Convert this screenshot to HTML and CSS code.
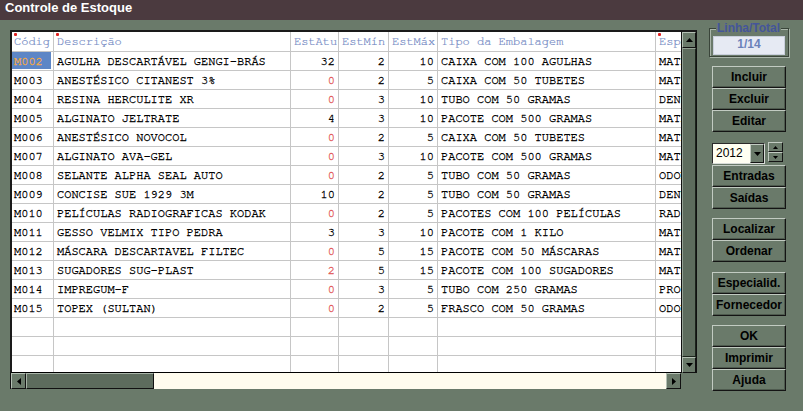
FILE: index.html
```html
<!DOCTYPE html>
<html lang="pt">
<head>
<meta charset="utf-8">
<title>Controle de Estoque</title>
<link rel="stylesheet" href="styles.css">
</head>
<body>
<div class="window">
  <div class="titlebar">Controle de Estoque</div>
  <div class="content">
    <div class="gridbox">
      <div class="grid-view">
        <table class="grid">
          <colgroup>
            <col class="c-cod"><col class="c-desc"><col class="c-num1"><col class="c-num2"><col class="c-num3"><col class="c-tipo"><col class="c-esp">
          </colgroup>
          <thead>
            <tr>
              <th class="req">Códig</th>
              <th class="req">Descrição</th>
              <th class="num">EstAtu</th>
              <th class="num">EstMín</th>
              <th class="num">EstMáx</th>
              <th>Tipo da Embalagem</th>
              <th class="req">Especialidade</th>
            </tr>
          </thead>
          <tbody>
            <tr><td class="sel">M002</td><td>AGULHA DESCARTÁVEL GENGI-BRÁS</td><td class="num">32</td><td class="num">2</td><td class="num">10</td><td>CAIXA COM 100 AGULHAS</td><td>MATERIAL</td></tr>
            <tr><td>M003</td><td>ANESTÉSICO CITANEST 3%</td><td class="num low">0</td><td class="num">2</td><td class="num">5</td><td>CAIXA COM 50 TUBETES</td><td>MATERIAL</td></tr>
            <tr><td>M004</td><td>RESINA HERCULITE XR</td><td class="num low">0</td><td class="num">3</td><td class="num">10</td><td>TUBO COM 50 GRAMAS</td><td>DENTÍSTICA</td></tr>
            <tr><td>M005</td><td>ALGINATO JELTRATE</td><td class="num">4</td><td class="num">3</td><td class="num">10</td><td>PACOTE COM 500 GRAMAS</td><td>MATERIAL</td></tr>
            <tr><td>M006</td><td>ANESTÉSICO NOVOCOL</td><td class="num low">0</td><td class="num">2</td><td class="num">5</td><td>CAIXA COM 50 TUBETES</td><td>MATERIAL</td></tr>
            <tr><td>M007</td><td>ALGINATO AVA-GEL</td><td class="num low">0</td><td class="num">3</td><td class="num">10</td><td>PACOTE COM 500 GRAMAS</td><td>MATERIAL</td></tr>
            <tr><td>M008</td><td>SELANTE ALPHA SEAL AUTO</td><td class="num low">0</td><td class="num">2</td><td class="num">5</td><td>TUBO COM 50 GRAMAS</td><td>ODONTOPEDIATRIA</td></tr>
            <tr><td>M009</td><td>CONCISE SUE 1929 3M</td><td class="num">10</td><td class="num">2</td><td class="num">5</td><td>TUBO COM 50 GRAMAS</td><td>DENTÍSTICA</td></tr>
            <tr><td>M010</td><td>PELÍCULAS RADIOGRAFICAS KODAK</td><td class="num low">0</td><td class="num">2</td><td class="num">5</td><td>PACOTES COM 100 PELÍCULAS</td><td>RADIOLOGIA</td></tr>
            <tr><td>M011</td><td>GESSO VELMIX TIPO PEDRA</td><td class="num">3</td><td class="num">3</td><td class="num">10</td><td>PACOTE COM 1 KILO</td><td>MATERIAL</td></tr>
            <tr><td>M012</td><td>MÁSCARA DESCARTAVEL FILTEC</td><td class="num low">0</td><td class="num">5</td><td class="num">15</td><td>PACOTE COM 50 MÁSCARAS</td><td>MATERIAL</td></tr>
            <tr><td>M013</td><td>SUGADORES SUG-PLAST</td><td class="num low">2</td><td class="num">5</td><td class="num">15</td><td>PACOTE COM 100 SUGADORES</td><td>MATERIAL</td></tr>
            <tr><td>M014</td><td>IMPREGUM-F</td><td class="num low">0</td><td class="num">3</td><td class="num">5</td><td>TUBO COM 250 GRAMAS</td><td>PROTESE</td></tr>
            <tr><td>M015</td><td>TOPEX (SULTAN)</td><td class="num low">0</td><td class="num">2</td><td class="num">5</td><td>FRASCO COM 50 GRAMAS</td><td>ODONTOPEDIATRIA</td></tr>
            <tr><td></td><td></td><td></td><td></td><td></td><td></td><td></td></tr>
            <tr><td></td><td></td><td></td><td></td><td></td><td></td><td></td></tr>
            <tr><td></td><td></td><td></td><td></td><td></td><td></td><td></td></tr>
          </tbody>
        </table>
      </div>
      <div class="vscroll">
        <div class="sb-btn vbtn"><svg width="7" height="4" viewBox="0 0 7 4"><polygon points="3.5,0 7,4 0,4" fill="#000"/></svg></div>
        <div class="vthumb"></div>
        <div class="sb-btn vbtn"><svg width="7" height="4" viewBox="0 0 7 4"><polygon points="0,0 7,0 3.5,4" fill="#000"/></svg></div>
      </div>
      <div class="hscroll">
        <div class="sb-btn hbtn"><svg width="4" height="7" viewBox="0 0 4 7"><polygon points="4,0 4,7 0,3.5" fill="#000"/></svg></div>
        <div class="hthumb"></div>
        <div class="htrack"></div>
        <div class="sb-btn hbtn"><svg width="4" height="7" viewBox="0 0 4 7"><polygon points="0,0 4,3.5 0,7" fill="#000"/></svg></div>
      </div>
      <div class="corner"></div>
    </div>

    <div class="side">
      <div class="counter">
        <span class="counter-label">Linha/Total</span>
        <div class="counter-value">1/14</div>
      </div>

      <div class="btn-group g1">
        <button class="btn">Incluir</button>
        <button class="btn">Excluir</button>
        <button class="btn">Editar</button>
      </div>

      <div class="year-row">
        <div class="combo">
          <span class="combo-text">2012</span>
          <span class="combo-btn"><svg width="7" height="4" viewBox="0 0 7 4"><polygon points="0,0 7,0 3.5,4" fill="#000"/></svg></span>
        </div>
        <div class="spin">
          <span class="spin-half"><svg width="5" height="3" viewBox="0 0 5 3"><polygon points="2.5,0 5,3 0,3" fill="#000"/></svg></span>
          <span class="spin-half"><svg width="5" height="3" viewBox="0 0 5 3"><polygon points="0,0 5,0 2.5,3" fill="#000"/></svg></span>
        </div>
      </div>

      <div class="btn-group g2">
        <button class="btn">Entradas</button>
        <button class="btn">Saídas</button>
      </div>

      <div class="btn-group g3">
        <button class="btn">Localizar</button>
        <button class="btn">Ordenar</button>
      </div>

      <div class="btn-group g4">
        <button class="btn">Especialid.</button>
        <button class="btn">Fornecedor</button>
      </div>

      <div class="btn-group g5">
        <button class="btn">OK</button>
        <button class="btn">Imprimir</button>
        <button class="btn">Ajuda</button>
      </div>
    </div>
  </div>
</div>
</body>
</html>
```
FILE: styles.css
```css
html, body {
  margin: 0;
  padding: 0;
}
body {
  background: #6a7a6a;
  width: 803px;
  height: 411px;
  overflow: hidden;
  font-family: "Liberation Sans", Arial, sans-serif;
}

.titlebar {
  height: 20px;
  line-height: 20px;
  background: #4b3a3f;
  color: #ffffff;
  font: bold 13px "Liberation Sans", Arial, sans-serif;
  padding-left: 5px;
}

.content {
  display: flex;
  align-items: flex-start;
}

/* ---------- grid ---------- */
.gridbox {
  margin-left: 10px;
  margin-top: 10px;
  display: grid;
  grid-template-columns: 671px 16px;
  grid-template-rows: 343px 16px;
}

.grid-view {
  background: #ffffff;
  border-top: 2px solid #1a1a1a;
  border-left: 2px solid #1a1a1a;
  border-bottom: 1px solid #000;
  box-sizing: border-box;
  overflow: hidden;
}

.grid {
  table-layout: fixed;
  border-collapse: separate;
  border-spacing: 0;
  width: 720px;
  font: 12px "Nimbus Mono PS", "Nimbus Mono L", "FreeMono", "Liberation Mono", monospace;
}
.c-cod { width: 42px; }
.c-desc { width: 237px; }
.c-num1 { width: 48px; }
.c-num2 { width: 50px; }
.c-num3 { width: 49px; }
.c-tipo { width: 218px; }
.c-esp { width: 76px; }

.grid th,
.grid td {
  box-sizing: border-box;
  border-right: 1px solid #c6c6c6;
  border-bottom: 1px solid #c6c6c6;
  padding: 0 3px;
  white-space: nowrap;
  overflow: hidden;
  text-align: left;
  vertical-align: middle;
}
.grid th {
  height: 20px;
  line-height: 19px;
  font-weight: normal;
  color: #6f86c2;
  position: relative;
  -webkit-text-stroke: 0.2px currentColor;
}
.grid td {
  height: 19px;
  line-height: 18px;
  color: #000;
  -webkit-text-stroke: 0.3px currentColor;
}
.grid th:first-child,
.grid td:first-child {
  padding-left: 2px;
}
.grid .num {
  text-align: right;
}
.grid .low {
  color: #e25a5a;
}
.grid td.sel {
  background: #5d86c6;
  color: #f2a845;
  box-shadow: inset -2px 0 0 #ffffff, inset 0 -1px 0 #ffffff;
}
.grid th.req::before {
  content: "";
  position: absolute;
  left: 2px;
  top: 1px;
  width: 3px;
  height: 3px;
  border-radius: 1px;
  background: #e02020;
}

/* ---------- scrollbars ---------- */
.sb-btn {
  box-sizing: border-box;
  background: #6a7a6a;
  border: 1px solid;
  border-color: #b4c0b4 #111 #111 #b4c0b4;
  display: flex;
  align-items: center;
  justify-content: center;
}

.vscroll {
  display: flex;
  flex-direction: column;
  background: #5d6c5d;
  border-left: 1px solid #111;
  border-right: 1px solid #111;
  border-top: 2px solid #1a1a1a;
  box-sizing: border-box;
}
.vbtn {
  height: 16px;
}
.vthumb {
  flex: 1;
  box-sizing: border-box;
  border: 1px solid;
  border-color: #93a093 #1c241c #1c241c #93a093;
  background: #5d6c5d;
}

.hscroll {
  display: flex;
  border-left: 1px solid #111;
  box-sizing: border-box;
}
.hbtn {
  width: 15px;
  height: 16px;
}
.hthumb {
  width: 128px;
  box-sizing: border-box;
  border: 1px solid;
  border-color: #a8b4a8 #111 #111 #a8b4a8;
  background: #5d6c5d;
}
.htrack {
  flex: 1;
  background: #fffcee;
}

.corner {
  background: #6a7a6a;
}

/* ---------- side panel ---------- */
.side {
  display: flex;
  flex-direction: column;
  padding-left: 12px;
}

.counter {
  position: relative;
  margin-top: 8px;
  width: 80px;
  box-sizing: border-box;
  padding: 7px 3px 1px 3px;
  border: 1px solid #3a453a;
  box-shadow: 1px 1px 0 #a9b5a9, inset 1px 1px 0 #a9b5a9;
}
.counter-label {
  position: absolute;
  top: -8px;
  left: 6px;
  padding: 0 1px;
  background: #6a7a6a;
  font: bold 12px "Liberation Sans", Arial, sans-serif;
  line-height: 14px;
  color: #44559a;
}
.counter-value {
  height: 19px;
  line-height: 19px;
  box-sizing: border-box;
  background: #e6eaf3;
  border: 1px solid #c9cfdc;
  text-align: center;
  font: bold 12px "Liberation Sans", Arial, sans-serif;
  color: #6b82ba;
}

.btn-group {
  display: flex;
  flex-direction: column;
  margin-left: 3px;
}
.g1 { margin-top: 9px; }
.g2 { margin-top: 1px; }
.g3 { margin-top: 9px; }
.g4 { margin-top: 10px; }
.g5 { margin-top: 9px; }

.btn {
  display: block;
  width: 74px;
  height: 22px;
  box-sizing: border-box;
  margin: 0;
  padding: 0;
  background: #6a7a6a;
  border: 1px solid;
  border-color: #c2cbc2 #141414 #141414 #c2cbc2;
  box-shadow: inset -1px -1px 0 #4e5a4e;
  font: bold 12px "Liberation Sans", Arial, sans-serif;
  color: #000;
  text-align: center;
  line-height: 20px;
}

.year-row {
  display: flex;
  align-items: flex-start;
  margin-top: 11px;
  margin-left: 3px;
}
.combo {
  display: flex;
  width: 53px;
  height: 21px;
  box-sizing: border-box;
  border: 1px solid;
  border-color: #2a2a2a #d8dcd8 #d8dcd8 #2a2a2a;
  background: #fffff2;
}
.combo-text {
  flex: 1;
  font: 12px "Liberation Sans", Arial, sans-serif;
  line-height: 19px;
  padding-left: 3px;
  color: #000;
}
.combo-btn {
  width: 14px;
  box-sizing: border-box;
  background: #6a7a6a;
  border: 1px solid;
  border-color: #c2cbc2 #141414 #141414 #c2cbc2;
  display: flex;
  align-items: center;
  justify-content: center;
}
.spin {
  display: flex;
  flex-direction: column;
  margin-left: 3px;
  margin-top: -1px;
}
.spin-half {
  width: 15px;
  height: 10px;
  box-sizing: border-box;
  background: #6a7a6a;
  border: 1px solid;
  border-color: #c2cbc2 #141414 #141414 #c2cbc2;
  display: flex;
  align-items: center;
  justify-content: center;
}
```
